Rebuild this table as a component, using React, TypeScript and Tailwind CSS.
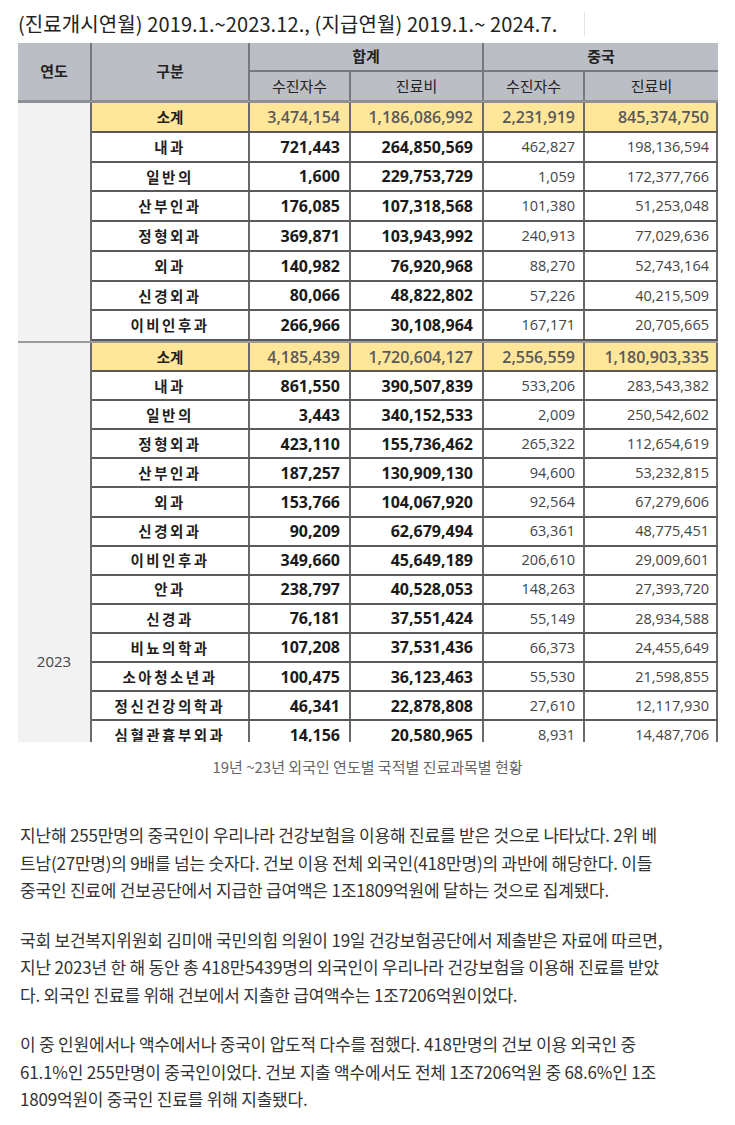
type Row = [string, string, string, string, string]

const GROUP_2022: Row[] = [
  ['소계', '3,474,154', '1,186,086,992', '2,231,919', '845,374,750'],
  ['내과', '721,443', '264,850,569', '462,827', '198,136,594'],
  ['일반의', '1,600', '229,753,729', '1,059', '172,377,766'],
  ['산부인과', '176,085', '107,318,568', '101,380', '51,253,048'],
  ['정형외과', '369,871', '103,943,992', '240,913', '77,029,636'],
  ['외과', '140,982', '76,920,968', '88,270', '52,743,164'],
  ['신경외과', '80,066', '48,822,802', '57,226', '40,215,509'],
  ['이비인후과', '266,966', '30,108,964', '167,171', '20,705,665'],
]

const GROUP_2023: Row[] = [
  ['소계', '4,185,439', '1,720,604,127', '2,556,559', '1,180,903,335'],
  ['내과', '861,550', '390,507,839', '533,206', '283,543,382'],
  ['일반의', '3,443', '340,152,533', '2,009', '250,542,602'],
  ['정형외과', '423,110', '155,736,462', '265,322', '112,654,619'],
  ['산부인과', '187,257', '130,909,130', '94,600', '53,232,815'],
  ['외과', '153,766', '104,067,920', '92,564', '67,279,606'],
  ['신경외과', '90,209', '62,679,494', '63,361', '48,775,451'],
  ['이비인후과', '349,660', '45,649,189', '206,610', '29,009,601'],
  ['안과', '238,797', '40,528,053', '148,263', '27,393,720'],
  ['신경과', '76,181', '37,551,424', '55,149', '28,934,588'],
  ['비뇨의학과', '107,208', '37,531,436', '66,373', '24,455,649'],
  ['소아청소년과', '100,475', '36,123,463', '55,530', '21,598,855'],
  ['정신건강의학과', '46,341', '22,878,808', '27,610', '12,117,930'],
  ['심혈관흉부외과', '14,156', '20,580,965', '8,931', '14,487,706'],
]

const PARAGRAPHS: string[][] = [
  [
    '지난해 255만명의 중국인이 우리나라 건강보험을 이용해 진료를 받은 것으로 나타났다. 2위 베',
    '트남(27만명)의 9배를 넘는 숫자다. 건보 이용 전체 외국인(418만명)의 과반에 해당한다. 이들',
    '중국인 진료에 건보공단에서 지급한 급여액은 1조1809억원에 달하는 것으로 집계됐다.',
  ],
  [
    '국회 보건복지위원회 김미애 국민의힘 의원이 19일 건강보험공단에서 제출받은 자료에 따르면,',
    '지난 2023년 한 해 동안 총 418만5439명의 외국인이 우리나라 건강보험을 이용해 진료를 받았',
    '다. 외국인 진료를 위해 건보에서 지출한 급여액수는 1조7206억원이었다.',
  ],
  [
    '이 중 인원에서나 액수에서나 중국이 압도적 다수를 점했다. 418만명의 건보 이용 외국인 중',
    '61.1%인 255만명이 중국인이었다. 건보 지출 액수에서도 전체 1조7206억원 중 68.6%인 1조',
    '1809억원이 중국인 진료를 위해 지출됐다.',
  ],
]

const kr = "font-['Noto_Sans_CJK_KR',sans-serif]"
const num = "font-['Open_Sans','Noto_Sans_CJK_KR',sans-serif]"

function DataRow({ row, tall }: { row: Row; tall: boolean }) {
  const [label, a, b, c, d] = row
  const sub = label === '소계'
  const cell = 'flex h-full items-center border-r-2 border-[#6a6a6a]'
  return (
    <div
      className={`flex ${tall ? 'h-[29.75px]' : 'h-[29.1px]'} border-b-2 border-[#5a5a5a] ${
        sub ? 'bg-[#ffe699]' : 'bg-white'
      }`}
    >
      <div className={`${cell} w-[158px] justify-center`}>
        <span
          className={`${kr} text-[14.5px] font-bold text-[#1e1e1e] ${sub ? 'tracking-normal' : 'tracking-[2.5px]'}`}
        >
          {label}
        </span>
      </div>
      <div className={`${cell} w-[101px] justify-end pr-[9px]`}>
        <span className={`${num} text-[16px] ${sub ? 'font-semibold text-[#595959]' : 'font-bold text-[#1a1a1a]'}`}>
          {a}
        </span>
      </div>
      <div className={`${cell} w-[133px] justify-end pr-[9px]`}>
        <span className={`${num} text-[16px] ${sub ? 'font-semibold text-[#595959]' : 'font-bold text-[#1a1a1a]'}`}>
          {b}
        </span>
      </div>
      <div className={`${cell} w-[101px] justify-end pr-[8px]`}>
        <span className={`${num} ${sub ? 'text-[16px] font-semibold text-[#595959]' : 'text-[14.5px] text-[#444]'}`}>
          {c}
        </span>
      </div>
      <div className={`${cell} w-[133px] justify-end pr-[7px]`}>
        <span className={`${num} ${sub ? 'text-[16px] font-semibold text-[#595959]' : 'text-[14.5px] text-[#444]'}`}>
          {d}
        </span>
      </div>
    </div>
  )
}

function YearGroup({ year, rows }: { year?: string; rows: Row[] }) {
  return (
    <div className="flex border-b-2 border-[#9a9a9a]">
      <div className="w-[74px] shrink-0 border-r-2 border-[#6a6a6a] bg-[#f2f2f2] text-center">
        {year && (
          <div className={`${num} pt-[308px] text-[15px] leading-[20px] text-[#444]`}>{year}</div>
        )}
      </div>
      <div className="flex flex-col">
        {rows.map((row) => (
          <DataRow key={row[0]} row={row} tall={!year} />
        ))}
      </div>
    </div>
  )
}

export default function App() {
  const head = `${kr} flex items-center justify-center text-[15px] text-[#222]`
  return (
    <div className="min-h-[1125px] w-[735px] bg-white">
      <div className="flex items-center pt-[10px]">
        <p className={`${kr} ml-[18px] text-[20px] leading-[28px] tracking-[0.1px] text-[#222]`}>
          (진료개시연월) 2019.1.~2023.12., (지급연월) 2019.1.~ 2024.7.
        </p>
        <div className="ml-auto mr-[150px] h-[24px] w-px bg-[#e2e2e2]" />
      </div>

      <div className="ml-[18px] mt-[5px] h-[699px] w-[700px] overflow-hidden">
        <div className="flex h-[60px] border-b-[3px] border-[#8e9096] bg-[#bcbec5]">
          <div className={`${head} w-[74px] border-r-2 border-[#76787d] font-bold`}>연도</div>
          <div className={`${head} w-[158px] border-r-2 border-[#76787d] font-bold`}>구분</div>
          <div className="flex w-[234px] flex-col border-r-2 border-[#76787d]">
            <div className={`${head} h-[29px] border-b-2 border-[#76787d] font-bold`}>합계</div>
            <div className="flex grow">
              <div className={`${head} w-[101px] border-r-2 border-[#76787d]`}>수진자수</div>
              <div className={`${head} grow`}>진료비</div>
            </div>
          </div>
          <div className="flex w-[234px] flex-col">
            <div className={`${head} h-[29px] border-b-2 border-[#76787d] font-bold`}>중국</div>
            <div className="flex grow">
              <div className={`${head} w-[101px] border-r-2 border-[#76787d]`}>수진자수</div>
              <div className={`${head} grow`}>진료비</div>
            </div>
          </div>
        </div>
        <YearGroup rows={GROUP_2022} />
        <YearGroup year="2023" rows={GROUP_2023} />
      </div>

      <p className={`${kr} mt-[14px] text-center text-[15px] leading-[22px] text-[#666]`}>
        19년 ~23년 외국인 연도별 국적별 진료과목별 현황
      </p>

      <div className="mt-[43px] flex flex-col gap-[22px] px-[20px]">
        {PARAGRAPHS.map((lines, i) => (
          <p key={i} className={`${kr} text-[17px] leading-[27.5px] tracking-[-0.2px] text-[#333]`}>
            {lines.map((line) => (
              <span key={line} className="block whitespace-nowrap">
                {line}
              </span>
            ))}
          </p>
        ))}
      </div>
    </div>
  )
}
